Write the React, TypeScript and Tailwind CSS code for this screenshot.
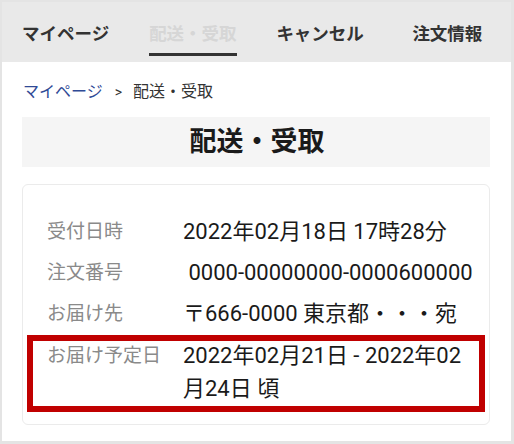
import React from "react";

const font = { fontFamily: "Roboto, 'Noto Sans CJK JP', sans-serif" };

export default function App() {
  const tabs = ["マイページ", "配送・受取", "キャンセル", "注文情報"];
  return (
    <div
      className="w-[514px] h-[444px] border-t-2 border-l-2 border-r-[3px] border-b-[3px] border-[#e4e4e4] bg-white flex flex-col"
      style={font}
    >
      <div className="h-[60px] bg-[#e9e9e9] grid grid-cols-4">
        {tabs.map((t, i) => (
          <div key={t} className="flex justify-center">
            <div className="relative flex flex-col items-center">
              <span
                className={`mt-[19px] text-[17.5px] leading-[26px] font-bold ${
                  i === 1 ? "text-[#d6d6d6]" : "text-[#333333]"
                }`}
              >
                {t}
              </span>
              {i === 1 && <div className="mt-[6px] h-[3px] w-full bg-[#333333]" />}
            </div>
          </div>
        ))}
      </div>
      <div className="pl-5 pr-[21px] flex flex-col">
        <div className="mt-[19px] h-[22px] flex items-center text-[16px] leading-[22px]">
          <span className="text-[#2f4a96] ml-px">マイページ</span>
          <span className="text-[#333333] text-[14px] ml-[12px] mr-[11px]">&gt;</span>
          <span className="text-[#333333]">配送・受取</span>
        </div>
        <div className="mt-[14px] h-[50px] bg-[#f5f5f5] flex items-center justify-center">
          <span className="text-[27px] font-bold text-[#1a1a1a] leading-none ml-[2px]">配送・受取</span>
        </div>
        <div className="mt-[17px] h-[241px] border border-[#ebebeb] rounded-[6px] pt-[30px] pl-[4px] pr-[4px] flex flex-col">
          <Row label="受付日時" value="2022年02月18日 17時28分" />
          <Row label="注文番号" value=" 0000-00000000-0000600000" className="mt-[8px]" />
          <Row label="お届け先" value="〒666-0000 東京都・・・宛" className="mt-[8px]" />
          <div className="mt-[5px] border-[6px] border-[#c00000] pl-[14px] pb-px flex">
            <div className="w-[136px] shrink-0 -mt-[2px] text-[19px] leading-[33px] text-[#8a8a8a]">
              お届け予定日
            </div>
            <div className="w-[290px] -mt-[2px] text-[22px] leading-[33px] text-[#1a1a1a]">
              2022年02月21日 - 2022年02月24日 頃
            </div>
          </div>
        </div>
      </div>
    </div>
  );
}

function Row({ label, value, className = "" }: { label: string; value: string; className?: string }) {
  return (
    <div className={`border-x-[6px] border-transparent pl-[14px] flex ${className}`}>
      <div className="w-[136px] shrink-0 text-[19px] leading-[33px] text-[#8a8a8a]">{label}</div>
      <div className="w-[290px] text-[22px] leading-[33px] text-[#1a1a1a] whitespace-pre">{value}</div>
    </div>
  );
}
